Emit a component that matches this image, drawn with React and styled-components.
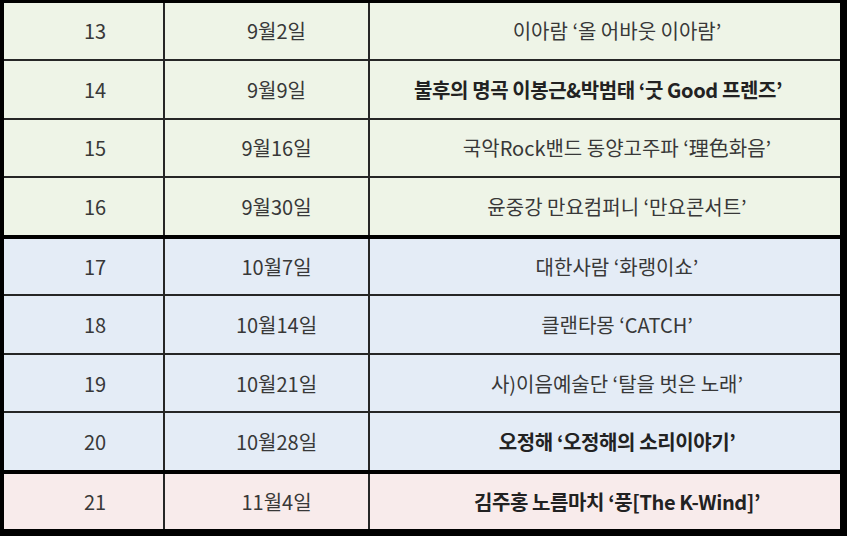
import React from 'react';
import styled, { createGlobalStyle } from 'styled-components';

const GlobalStyle = createGlobalStyle`
  html, body {
    margin: 0;
    padding: 0;
    background: #000;
  }
  body {
    font-family: 'Noto Sans CJK KR', 'Noto Sans', sans-serif;
  }
`;

const schedule = [
  { no: 13, date: '9월2일', title: '이아람 ‘올 어바웃 이아람’', group: 'sep' },
  { no: 14, date: '9월9일', title: '불후의 명곡 이봉근&박범태 ‘굿 Good 프렌즈’', group: 'sep', bold: true, pad: -14 },
  { no: 15, date: '9월16일', title: '국악Rock밴드 동양고주파 ‘理色화음’', group: 'sep' },
  { no: 16, date: '9월30일', title: '윤중강 만요컴퍼니 ‘만요콘서트’', group: 'sep' },
  { no: 17, date: '10월7일', title: '대한사람 ‘화랭이쇼’', group: 'oct', first: true },
  { no: 18, date: '10월14일', title: '클랜타몽 ‘CATCH’', group: 'oct' },
  { no: 19, date: '10월21일', title: '사)이음예술단 ‘탈을 벗은 노래’', group: 'oct' },
  { no: 20, date: '10월28일', title: '오정해 ‘오정해의 소리이야기’', group: 'oct', bold: true },
  { no: 21, date: '11월4일', title: '김주홍 노름마치 ‘풍[The K-Wind]’', group: 'nov', first: true, bold: true },
];

const backgrounds = {
  sep: '#eef4e7',
  oct: '#e4ecf6',
  nov: '#f8ebeb',
};

const Table = styled.div`
  margin-left: 4px;
  width: 836px;
  height: 529px;
  display: grid;
  grid-template-rows: repeat(9, 1fr);
`;

const Row = styled.div`
  display: grid;
  grid-template-columns: 161px 205px 1fr;
  background: ${({ group }) => backgrounds[group]};
  border-top: ${({ top }) => (top ? '3px solid #000' : '2px solid #262626')};
  ${({ first }) => first && 'border-top: 4px solid #000;'}
  box-sizing: border-box;
`;

// pad > 0 nudges the text right, pad < 0 nudges it left
const Cell = styled.div`
  display: flex;
  align-items: center;
  justify-content: center;
  padding-left: ${({ pad = 0 }) => Math.max(pad, 0)}px;
  padding-right: ${({ pad = 0 }) => Math.max(-pad, 0)}px;
  border-right: ${({ last }) => (last ? 'none' : '2px solid #262626')};
  font-size: 20px;
  font-weight: ${({ bold }) => (bold ? 700 : 400)};
  color: ${({ bold }) => (bold ? '#222' : '#383838')};
  white-space: nowrap;
  letter-spacing: ${({ bold }) => (bold ? '-0.4px' : '0')};
`;

export default function App() {
  return (
    <>
      <GlobalStyle />
      <Table>
        {schedule.map((r, i) => (
          <Row key={r.no} group={r.group} top={i === 0} first={r.first}>
            <Cell pad={23}>{r.no}</Cell>
            <Cell pad={20}>{r.date}</Cell>
            <Cell last pad={r.pad ?? 24} bold={r.bold}>
              {r.title}
            </Cell>
          </Row>
        ))}
      </Table>
    </>
  );
}
